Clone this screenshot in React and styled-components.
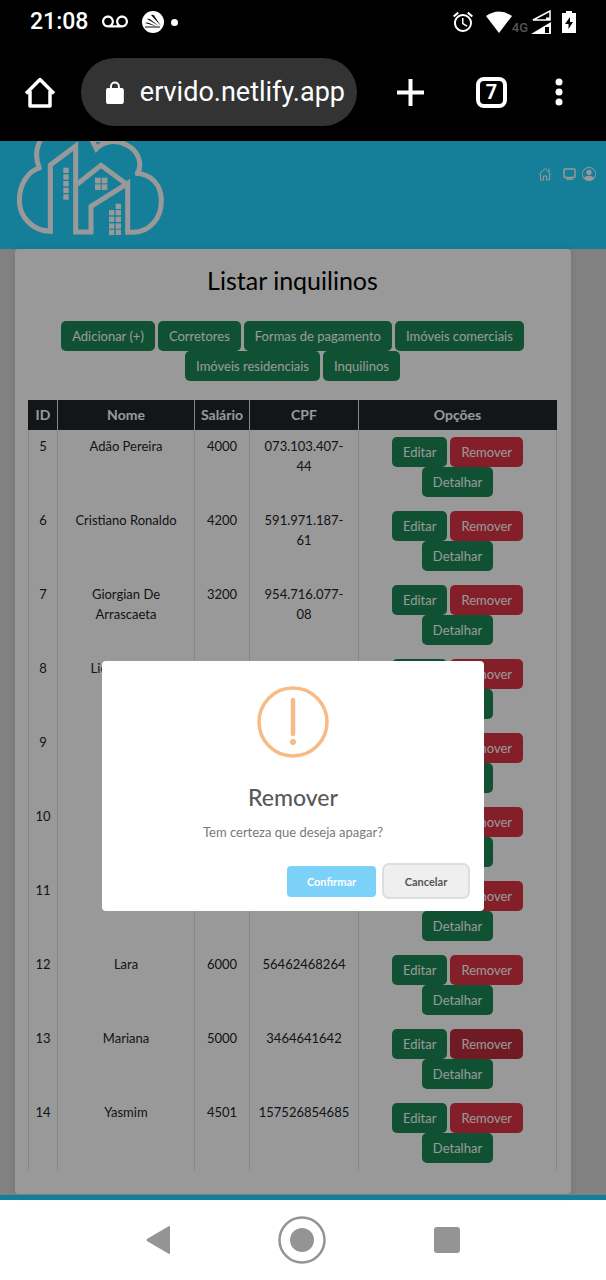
import React from "react";
import styled, { createGlobalStyle } from "styled-components";
import { BsPersonCircle } from "react-icons/bs";
import { MdVoicemail, MdAlarm } from "react-icons/md";

const Global = createGlobalStyle`
  *, *::before, *::after { box-sizing: border-box; }
  body { margin: 0; background: #fff; font-family: Lato, "Open Sans", sans-serif; }
  button { font: inherit; margin: 0; cursor: pointer; }
`;

const Phone = styled.div`
  display: flex;
  flex-direction: column;
  min-height: 100vh;
`;

/* Phone status bar and browser bar */
const Chrome = styled.header`
  background: #000;
  color: #fff;
  font-family: Roboto, sans-serif;
  padding-bottom: 15px;
`;

const StatusBar = styled.div`
  display: flex;
  justify-content: space-between;
  align-items: center;
  height: 44px;
  padding: 0 30px;
`;

const StatusGroup = styled.div`
  display: flex;
  align-items: center;
  gap: ${(p) => p.$gap}px;
`;

const Clock = styled.span`
  font-size: 23px;
  font-weight: 500;
  line-height: 28px;
`;

const Network = styled.span`
  display: flex;
  align-items: flex-end;
  font-size: 13px;
  line-height: 14px;
  font-weight: 500;
  color: #555;
  gap: 3px;
`;

const BrowserBar = styled.div`
  display: flex;
  align-items: center;
  margin-top: 14px;
  padding: 0 42px 0 24px;
`;

const IconButton = styled.button`
  display: flex;
  align-items: center;
  justify-content: center;
  padding: 0;
  border: 0;
  background: none;
  color: inherit;
  svg { display: block; }
`;

const Address = styled.div`
  display: flex;
  align-items: center;
  flex: 0 1 276px;
  min-width: 0;
  height: 68px;
  margin-left: 25px;
  padding: 0 12px 0 25px;
  gap: 16px;
  border-radius: 34px;
  background: #333;
  font-size: 27px;
  white-space: nowrap;
`;

const BrowserActions = styled.div`
  display: flex;
  flex: 1;
  align-items: center;
  justify-content: space-between;
  padding-left: 40px;
`;

const TabCount = styled(IconButton)`
  width: 31px;
  height: 31px;
  border: 4px solid #fff;
  border-radius: 8px;
  font-size: 20px;
  line-height: 20px;
  font-weight: 700;
`;

/* Web page */
const Site = styled.div`
  position: relative;
  background: #d8d8d8;
  color: #212529;
  font-size: 13px;
`;

const SiteHeader = styled.div`
  display: flex;
  justify-content: space-between;
  align-items: flex-start;
  height: 108px;
  padding: 0 10px 0 16px;
  background: #23d3ff;
  color: #fff;
`;

const SiteNav = styled.nav`
  display: flex;
  align-items: center;
  padding-top: 26px;
  gap: 6px;
`;

const NavLink = styled.a`
  display: block;
  height: 14px;
  margin-right: ${(p) => (p.$spaced ? 5 : 0)}px;
  color: #fff;
  svg { display: block; }
`;

const Card = styled.main`
  margin: 0 35px 0 15px;
  padding: 15px 14px 24px 13px;
  border-radius: 4px;
  background: #fff;
  box-shadow: 0 0 10px rgba(0, 0, 0, 0.1);
`;

const Title = styled.h1`
  margin: 0 0 25px;
  color: #000;
  font-size: 25px;
  font-weight: 400;
  line-height: 32px;
  text-align: center;
`;

const ButtonGroup = styled.div`
  display: flex;
  flex-wrap: wrap;
  justify-content: center;
  column-gap: 3px;
`;

const fills = { success: "#198754", danger: "#dc3545", pressed: "#bb2d3b" };

const Button = styled.button`
  height: 30px;
  padding: 0 11px;
  border: 0;
  border-radius: 5px;
  background: ${(p) => fills[p.$kind || "success"]};
  color: #fff;
  font-size: 13px;
  line-height: 20px;
  white-space: nowrap;
`;

const Table = styled.table`
  width: 100%;
  margin-top: 19px;
  border-collapse: collapse;
  table-layout: fixed;
  text-align: center;
  line-height: 20px;
`;

const HeadCell = styled.th`
  height: 30px;
  padding: 0;
  border: 1px solid #dee2e6;
  border-width: 0 1px;
  background: #212529;
  color: #fff;
  font-size: 14px;
  font-weight: 700;
  &:first-child { border-left-color: #212529; }
  &:last-child { border-right-color: #212529; }
`;

const cellPadding = { id: "6px 0", text: "6px 8px", actions: "7px 30px" };

const Cell = styled.td`
  padding: ${(p) => cellPadding[p.$kind || "text"]};
  border: 1px solid #dee2e6;
  border-width: 0 1px;
  vertical-align: top;
`;

const SiteFooter = styled.footer`
  height: 5px;
  margin-top: 1px;
  background: #23d3ff;
`;

/* Confirmation dialog */
const Overlay = styled.div`
  position: absolute;
  inset: 0;
  display: flex;
  justify-content: center;
  align-items: flex-start;
  padding: 520px 20px 0 0;
  background: rgba(0, 0, 0, 0.4);
`;

const Dialog = styled.div`
  display: flex;
  flex-direction: column;
  align-items: center;
  width: 382px;
  padding: 25px 14px 12px;
  border-radius: 4px;
  background: #fff;
`;

const DialogTitle = styled.h2`
  margin: 24px 0 0;
  color: #595959;
  font-size: 23px;
  font-weight: 500;
  line-height: 30px;
`;

const DialogText = styled.p`
  margin: 10px 0 21px;
  color: #797979;
  font-size: 13px;
  line-height: 20px;
`;

const DialogActions = styled.div`
  display: flex;
  align-self: flex-end;
  align-items: center;
  gap: 6px;
`;

const DialogButton = styled.button`
  height: ${(p) => (p.$focused ? 36 : 31)}px;
  width: ${(p) => (p.$focused ? 88 : 89)}px;
  padding: 0;
  border: ${(p) => (p.$focused ? "2px solid #dbdde2" : "0")};
  border-radius: ${(p) => (p.$focused ? 7 : 4)}px;
  background: ${(p) => (p.$focused ? "#efefef" : "#7cd1f9")};
  color: ${(p) => (p.$focused ? "#555" : "#fff")};
  font-size: 11px;
  font-weight: 700;
`;

/* Phone navigation bar */
const PhoneNav = styled.nav`
  display: flex;
  flex: 1;
  align-items: center;
  justify-content: space-between;
  min-height: 80px;
  padding: 0 146px;
  background: #fff;
  color: #949494;
`;

const shortcuts = [
  "Adicionar (+)",
  "Corretores",
  "Formas de pagamento",
  "Imóveis comerciais",
  "Imóveis residenciais",
  "Inquilinos",
];

const tenants = [
  [5, "Adão Pereira", "4000", "073.103.407-44"],
  [6, "Cristiano Ronaldo", "4200", "591.971.187-61"],
  [7, "Giorgian De Arrascaeta", "3200", "954.716.077-08"],
  [8, "Lionel Messi", "", ""],
  [9, "", "", ""],
  [10, "", "", ""],
  [11, "", "", ""],
  [12, "Lara", "6000", "56462468264"],
  [13, "Mariana", "5000", "3464641642"],
  [14, "Yasmim", "4501", "157526854685"],
];

function Squares({ cells, size }) {
  return cells.map(([x, y]) => (
    <rect key={`${x}-${y}`} x={x} y={y} width={size} height={size} fill="currentColor" />
  ));
}

function Logo() {
  return (
    <svg width="150" height="96" viewBox="48 33 450 288" fill="none" stroke="currentColor" strokeWidth="15" role="img" aria-label="Ervido">
      <path d="M124 25C108 52 106 85 118 114" />
      <path d="M124 112C82 122 58 165 58 212C58 262 100 303 151 304V105L227 48V306H273V229L383 160V307H400C450 305 484 265 484 212C484 165 455 132 406 130" />
      <path d="M276 30L289 56C312 32 350 28 380 45C420 65 428 108 410 134" />
      <path d="M270 33H320" strokeWidth="6" />
      <path d="M232 162L303 106L376 160" />
      <g stroke="none">
        <Squares size={16} cells={[113, 133, 153, 173, 193].map((y) => [190, y])} />
        <Squares size={17} cells={[[285, 143], [305, 143], [285, 163], [305, 163]]} />
        <Squares size={16} cells={[[347, 221], ...[240, 260, 280, 299].flatMap((y) => [[327, y], [347, y]])]} />
      </g>
    </svg>
  );
}

function AppBadge() {
  return (
    <svg width="22" height="22" viewBox="0 0 22 22">
      <circle cx="11" cy="11" r="11" fill="#fff" />
      <path d="M9 4Q12 3 13 6L19 15Z" />
      <path d="M5 8Q7 7 9 9L17 15Z" />
      <path d="M3 12Q5 11 7 12L15 15.500Z" />
      <path d="M3 15.500H18V16.500H3Z" />
    </svg>
  );
}

export default function App() {
  return (
    <Phone>
      <Global />
      <Chrome>
        <StatusBar>
          <StatusGroup $gap={14}>
            <Clock>21:08</Clock>
            <MdVoicemail size={26} />
            <StatusGroup $gap={7}>
              <AppBadge />
              <svg width="7" height="7" viewBox="0 0 7 7">
                <circle cx="3.5" cy="3.5" r="3.5" fill="#fff" />
              </svg>
            </StatusGroup>
          </StatusGroup>
          <StatusGroup $gap={11}>
            <MdAlarm size={24} />
            <StatusGroup $gap={0}>
              <svg width="26" height="22" viewBox="0 0 26 22">
                <path d="M0 5Q13 -4 26 5L13 22Z" fill="#fff" />
              </svg>
              <Network>
                4G
                <svg width="20" height="26" viewBox="0 0 20 26" fill="none">
                  <path d="M2 11L19 2V11Z" stroke="#fff" strokeWidth="1.500" />
                  <path d="M15 8.500H19V11H15Z" fill="#fff" />
                  <path d="M0 25L20 13V25Z" fill="#fff" />
                  <path d="M14 18H18V24H14Z" fill="#000" />
                </svg>
              </Network>
            </StatusGroup>
            <svg width="14" height="22" viewBox="0 0 14 22">
              <path d="M4 0H10V2H14V22H0V2H4Z" fill="#fff" />
              <path d="M8 6L3 13H6.500V18L11 11H8Z" fill="#000" />
            </svg>
          </StatusGroup>
        </StatusBar>
        <BrowserBar>
          <IconButton aria-label="Home">
            <svg width="32" height="32" viewBox="0 0 32 32" fill="none" stroke="#fff" strokeWidth="3.500" strokeLinejoin="round">
              <path d="M2 17.500L16 3.500L30 17.500M6 15V30H26V15" />
            </svg>
          </IconButton>
          <Address>
            <svg width="18" height="23" viewBox="0 0 18 23" fill="none">
              <path d="M5 9V5.500A4 4 0 0 1 13 5.500V9" stroke="#fff" strokeWidth="2" />
              <rect y="7" width="18" height="16" rx="2" fill="#fff" />
            </svg>
            <span>ervido.netlify.app</span>
          </Address>
          <BrowserActions>
            <IconButton aria-label="Nova aba">
              <svg width="32" height="27" viewBox="0 0 32 27" stroke="#fff" strokeWidth="4">
                <path d="M13.500 0V27M0 13.500H27" />
              </svg>
            </IconButton>
            <TabCount aria-label="Abas">7</TabCount>
            <IconButton aria-label="Menu">
              <svg width="10" height="28" viewBox="0 0 10 28" fill="#fff">
                <circle cx="5" cy="4" r="3.500" />
                <circle cx="5" cy="14" r="3.500" />
                <circle cx="5" cy="24" r="3.500" />
              </svg>
            </IconButton>
          </BrowserActions>
        </BrowserBar>
      </Chrome>

      <Site>
        <SiteHeader>
          <Logo />
          <SiteNav>
            <NavLink href="#inicio" aria-label="Início" $spaced>
              <svg width="14" height="14" viewBox="0 0 14 14" fill="none" stroke="currentColor">
                <path d="M1 7.500L7 1.500L13 7.500M11 5V1.500M2.500 7V13H5.500V9H8.500V13H11.500V7" />
              </svg>
            </NavLink>
            <NavLink href="#painel" aria-label="Painel">
              <svg width="13" height="14" viewBox="0 0 13 14" fill="none" stroke="currentColor">
                <rect x="1" y="2" width="11" height="8.500" rx="1" strokeWidth="1.500" />
                <path d="M3 12H10" strokeWidth="1.500" />
              </svg>
            </NavLink>
            <NavLink href="#perfil" aria-label="Perfil"><BsPersonCircle size={14} /></NavLink>
          </SiteNav>
        </SiteHeader>
        <Card>
          <Title>Listar inquilinos</Title>
          <ButtonGroup>
            {shortcuts.map((label) => <Button key={label}>{label}</Button>)}
          </ButtonGroup>
          <Table>
            <colgroup>
              <col width="29" />
              <col width="137" />
              <col width="55" />
              <col width="109" />
              <col />
            </colgroup>
            <thead>
              <tr>
                {["ID", "Nome", "Salário", "CPF", "Opções"].map((h) => <HeadCell key={h}>{h}</HeadCell>)}
              </tr>
            </thead>
            <tbody>
              {tenants.map(([id, name, salary, cpf]) => (
                <tr key={id}>
                  <Cell $kind="id">{id}</Cell>
                  <Cell>{name}</Cell>
                  <Cell>{salary}</Cell>
                  <Cell>{cpf}</Cell>
                  <Cell $kind="actions">
                    <ButtonGroup>
                      <Button>Editar</Button>
                      <Button $kind={id === 13 ? "pressed" : "danger"}>Remover</Button>
                      <Button>Detalhar</Button>
                    </ButtonGroup>
                  </Cell>
                </tr>
              ))}
            </tbody>
          </Table>
        </Card>
        <SiteFooter />
        <Overlay>
          <Dialog role="dialog" aria-modal="true" aria-labelledby="dialog-title">
            <svg width="72" height="72" viewBox="0 0 72 72" fill="none" stroke="#f8bb86">
              <circle cx="36" cy="36" r="34" strokeWidth="3.500" />
              <path d="M36 14V48" strokeWidth="4.500" strokeLinecap="round" />
              <circle cx="36" cy="56" r="3" fill="#f8bb86" stroke="none" />
            </svg>
            <DialogTitle id="dialog-title">Remover</DialogTitle>
            <DialogText>Tem certeza que deseja apagar?</DialogText>
            <DialogActions>
              <DialogButton>Confirmar</DialogButton>
              <DialogButton $focused>Cancelar</DialogButton>
            </DialogActions>
          </Dialog>
        </Overlay>
      </Site>

      <PhoneNav>
        <IconButton aria-label="Voltar">
          <svg width="24" height="28" viewBox="0 0 24 28" fill="currentColor">
            <path d="M23 0Q24 0 24 1V27Q24 28 23 28L1 15Q0 14 1 13Z" />
          </svg>
        </IconButton>
        <IconButton aria-label="Início">
          <svg width="48" height="48" viewBox="0 0 48 48" fill="currentColor">
            <circle cx="24" cy="24" r="22.500" fill="none" stroke="currentColor" strokeWidth="2.500" />
            <circle cx="24" cy="24" r="12" />
          </svg>
        </IconButton>
        <IconButton aria-label="Recentes">
          <svg width="26" height="26" viewBox="0 0 26 26" fill="currentColor">
            <rect width="26" height="26" rx="3" />
          </svg>
        </IconButton>
      </PhoneNav>
    </Phone>
  );
}
